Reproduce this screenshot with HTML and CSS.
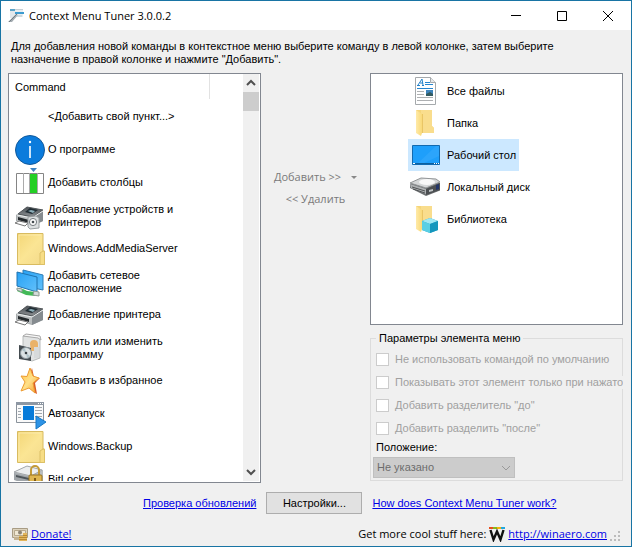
FILE: index.html
```html
<!DOCTYPE html>
<html lang="ru">
<head>
<meta charset="utf-8">
<title>Context Menu Tuner 3.0.0.2</title>
<link rel="stylesheet" href="styles.css">
</head>
<body>
<svg class="defs" aria-hidden="true">
  <defs>
    <linearGradient id="gFolder" x1="0" y1="0" x2="1" y2="1"><stop offset="0" stop-color="#f3d677"/><stop offset=".5" stop-color="#fbe594"/><stop offset="1" stop-color="#f2d98a"/></linearGradient>
    <linearGradient id="gFront" x1="0" y1="0" x2="1" y2="0"><stop offset="0" stop-color="#ffeaa8"/><stop offset="1" stop-color="#f9d978"/></linearGradient>
    <linearGradient id="gBlue" x1="0" y1="0" x2="1" y2="1"><stop offset="0" stop-color="#27a2f5"/><stop offset="1" stop-color="#62c0fb"/></linearGradient>
    <linearGradient id="gStar" x1="0" y1="0" x2="1" y2="1"><stop offset="0" stop-color="#ffc340"/><stop offset=".5" stop-color="#ffe08a"/><stop offset="1" stop-color="#f59a1e"/></linearGradient>
    <linearGradient id="gDark" x1="0" y1="0" x2="0" y2="1"><stop offset="0" stop-color="#4c5156"/><stop offset="1" stop-color="#8d9194"/></linearGradient>
  </defs>
  <symbol id="folder" viewBox="0 0 32 32">
    <path d="M3.500.500h25.500v17.500h1.500v13.500h-27z" fill="url(#gFolder)" stroke="#d8bb60"/>
    <path d="M29 18l-3 2v11.500h4.500v-13z" fill="#f7dd85" stroke="#dcc067"/>
    <path d="M5 30V2h22" fill="none" stroke="#fdf0b8" opacity=".7"/>
  </symbol>
  <symbol id="printer" viewBox="0 0 32 32">
    <path d="M2 15L13 7l16 3v11l-11 5L2 21z" fill="#a6abad"/>
    <path d="M4 14L13 7l16 3-10 7z" fill="url(#gDark)" stroke="#54595c"/>
    <path d="M11 12l5-4 8 2-6 4z" fill="#202c33"/><path d="M14 11l3-1 4 1-2 2z" fill="#8dafba"/>
    <path d="M3 15l15 3v7L3 21z" fill="#b9bdbe"/><path d="M18 18l11-7v10l-11 5z" fill="#858b8f"/>
    <path d="M4 17l11 3v3L4 20z" fill="#24292c"/><path d="M1 23l4-2 9 2-3 3z" fill="#fff" stroke="#777"/>
    <path d="M3 15l15 3 11-7" fill="none" stroke="#ecefef"/>
  </symbol>
  <symbol id="openfolder" viewBox="0 0 32 32">
    <path d="M8 3h16v16l2 2v5H10z" fill="#f5d57b"/><path d="M24 3v16l2 2v5H13V3z" fill="#f9dd8d"/>
    <path d="M8 3l6 4v19l-1 3-5-3z" fill="url(#gFront)"/><path d="M14.500 7v19" stroke="#e9c566"/>
  </symbol>
</svg>

<div class="window">
  <header class="titlebar">
    <svg class="app-icon" viewBox="0 0 16 16" aria-hidden="true"><path d="M2 1h6v9H2z" fill="#e2e8ec"/><path d="M2 1h6v2H2z" fill="#5ba4c9"/><path d="M7 1h8v8H7z" fill="#e9eef1"/><path d="M7 1h8v1H7z" fill="#c7d0d6"/><path d="M7 4h9v2H7z" fill="#3c9bd0"/><path d="M0 14L8 6l2 1-6 7z" fill="#a4acb1"/><path d="M1 14L9 6" stroke="#727d84"/><path d="M8 8h6" stroke="#b9c6cd"/></svg>
    <h1>Context Menu Tuner 3.0.0.2</h1>
    <div class="caption-buttons">
      <button type="button" aria-label="Minimize"><svg viewBox="0 0 10 10"><path d="M0 4.500h10"/></svg></button>
      <button type="button" aria-label="Maximize"><svg viewBox="0 0 10 10"><path d="M.500.500h9v9h-9z"/></svg></button>
      <button type="button" aria-label="Close"><svg viewBox="0 0 10 10"><path d="M0 0l10 10M10 0L0 10"/></svg></button>
    </div>
  </header>

  <p class="intro">Для добавления новой команды в контекстное меню выберите команду в левой колонке, затем выберите назначение в правой колонке и нажмите "Добавить".</p>

  <main class="columns">
    <section class="panel commands">
      <div class="command-view">
        <div class="list-head"><span>Command</span></div>
        <ul class="command-list">
          <li><span class="icon"></span><span>&lt;Добавить свой пункт...&gt;</span></li>
          <li><svg class="icon" viewBox="0 0 32 32"><circle cx="16" cy="16" r="14.500" fill="#0b7bdc" stroke="#12599b"/><path d="M16 12v12" stroke="#fff" stroke-width="1.600"/><circle cx="16" cy="8" r="1.200" fill="#fff"/></svg><span>О программе</span></li>
          <li><svg class="icon" viewBox="0 0 32 32"><path d="M16 1h7l-3.500 4z" fill="#3f83c1"/><path d="M2.500 6.500h27v20h-27z" fill="#fff" stroke="#858585"/><path d="M9.500 6v20M15.500 6v20M23.500 6v20" stroke="#ababab"/><path d="M16 7h7v19h-7z" fill="#23cf24"/></svg><span>Добавить столбцы</span></li>
          <li><svg class="icon" viewBox="0 0 32 32"><use href="#printer"/><path d="M14 17l8-1 3 2v10l-9 1-2-2z" fill="#dcdfe0" stroke="#9a9fa1"/><circle cx="19" cy="22" r="3.600" fill="#fafafa" stroke="#767c80"/><circle cx="19" cy="22" r="1.300" fill="#444b50"/></svg><span>Добавление устройств и принтеров</span></li>
          <li><svg class="icon"><use href="#folder"/></svg><span>Windows.AddMediaServer</span></li>
          <li><svg class="icon" viewBox="0 0 32 32"><path d="M9 4l20 5v15L9 20z" fill="url(#gBlue)" stroke="#2d7db6"/><path d="M3 6l20 5v15L3 20z" fill="url(#gBlue)" stroke="#1e73b0"/><path d="M3 22l6 1 4 2 8 1v4l-9-1-9-4z" fill="#42b957"/><path d="M3 22l5 1v3l-5-2zM20 25l5 1v4l-6-1z" fill="#d5dcda" stroke="#8d9b94"/></svg><span>Добавить сетевое расположение</span></li>
          <li><svg class="icon"><use href="#printer"/></svg><span>Добавление принтера</span></li>
          <li><svg class="icon" viewBox="0 0 32 32"><path d="M9 4l15 1 2 3v18l-8 3-9-3z" fill="#e1e3e3" stroke="#b9bcbc"/><path d="M9 4l3-2 14 2 1 4-3-2z" fill="#f7f7f7" stroke="#aaa"/><path d="M16 12a4 4 0 0 1 8 0v7h-7z" fill="#e9b269"/><path d="M20 15h5v11h-5z" fill="#d7dadb"/><path d="M5 13l12 3v13L5 27z" fill="#444b50"/><circle cx="12" cy="21" r="5.500" fill="#dce2e4" stroke="#8e999e"/><path d="M12 21l-4-3 3-2zM12 21l4 3-3 2z" fill="#b1c4ca"/><circle cx="12" cy="21" r="1.300" fill="#3a4145"/></svg><span>Удалить или изменить программу</span></li>
          <li><svg class="icon" viewBox="0 0 32 32"><path d="M18 3l2 9 6 1-5 5 2 11-2-1-8-9-4-7 6-.500z" fill="#d95d28"/><path d="M16 3l3 8 6 2-6 5 2 10-6-5-8 3 4-9-4-6 6 .500z" fill="url(#gStar)" stroke="#ee9c32"/></svg><span>Добавить в избранное</span></li>
          <li><svg class="icon" viewBox="0 0 32 32"><path d="M2.500 4.500h27v20h-27z" fill="#fafafa" stroke="#8a929b"/><path d="M2 4h28v3H2z" fill="#8d97a3"/><path d="M24 5.500h1m1 0h1m1 0h1" stroke="#fff"/><path d="M4 10.500h3m-3 3h3m-3 3h3m-3 3h3M21 9.500h7m-7 3h7m-7 3h7m-7 3h7" stroke="#a1a8af"/><path d="M9 8h11v14H9z" fill="#087bd9"/><path d="M22 18l10 6-10 7z" fill="#2d93e6" stroke="#1878c4"/></svg><span>Автозапуск</span></li>
          <li><svg class="icon"><use href="#folder"/></svg><span>Windows.Backup</span></li>
          <li><svg class="icon" viewBox="0 0 32 32"><path d="M0 8l13-6 16 4v11l-11 5L0 15z" fill="#b9bec1"/><path d="M0 8l13-6 15 4-11 6z" fill="#eceeef" stroke="#a5a9ac"/><path d="M0 9l17 4v9L0 16z" fill="#a0a5a9"/><path d="M2 11l13 3v2L2 13z" fill="#4e555a"/><path d="M17 11V6a4 4 0 0 1 8 0v6" fill="none" stroke="#c49b38" stroke-width="2"/><rect x="15" y="11" width="13" height="13" rx="1" fill="#dfb650" stroke="#987321"/><path d="M21 14v6" stroke="#805a14" stroke-width="2"/></svg><span>BitLocker</span></li>
        </ul>
      </div>
      <div class="scrollbar">
        <button type="button" aria-label="Scroll up"><svg viewBox="0 0 10 8"><path d="M1 6l4-4 4 4"/></svg></button>
        <div class="thumb"></div>
        <button type="button" class="down" aria-label="Scroll down"><svg viewBox="0 0 10 8"><path d="M1 2l4 4 4-4"/></svg></button>
      </div>
    </section>

    <div class="actions">
      <button type="button" class="add" disabled>Добавить &gt;&gt;<span class="caret"></span></button>
      <button type="button" disabled>&lt;&lt; Удалить</button>
    </div>

    <div class="right">
      <ul class="panel targets">
        <li><svg class="icon" viewBox="0 0 32 32"><path d="M7.500 2.500h15l5 5v22h-20z" fill="#fff" stroke="#a5a9ac"/><path d="M22.500 2.500v5h5" fill="#e5e7e8" stroke="#a5a9ac"/><path d="M10 10l4-6 1 6M12 8h3M9 10.500h3m2 0h2" fill="none" stroke="#2482c9"/><path d="M17 7.500h5M17 9.500h8M9 13.500h16" stroke="#2585cf"/><path d="M9 16.500h7m-7 3h7m-7 3h16m-16 3h16" stroke="#aeb0b2"/><path d="M18 15h7v6h-7z" fill="#3e84bc"/><path d="M18 19l4-2 3 2v2h-7z" fill="#345b60"/></svg><span>Все файлы</span></li>
        <li><svg class="icon"><use href="#openfolder"/></svg><span>Папка</span></li>
        <li class="selected"><svg class="icon" viewBox="0 0 32 32"><path d="M4.500 6.500h27v19h-27z" fill="#1e9ffb" stroke="#126ab0"/><path d="M31 7v10L14 25h-5L28 7z" fill="#42b0ff" opacity=".4"/><path d="M5 24.500h26" stroke="#0c5f9e"/><path d="M5 24.500h2m19 0h1m1 0h1m1 0h1" stroke="#fff"/></svg><span>Рабочий стол</span></li>
        <li><svg class="icon" viewBox="0 0 32 32"><path d="M2 13l11-5 15 1 5 4v6l-15 6L2 17z" fill="#6d7072"/><path d="M2 12l11-5 15 1 4 3-14 6z" fill="#d5d7d8" stroke="#929597"/><ellipse cx="19" cy="11" rx="8" ry="3" fill="#f8f8f8"/><path d="M2 13l16 5v5L3 17z" fill="#aeb1b3"/><path d="M4 16l13 4m-12-2l12 4" stroke="#505355"/><path d="M18 18l14-6v7l-14 5z" fill="#4c4f52"/><path d="M21 19l4-1v2l-4 1z" fill="#bfc3c5"/><path d="M28 14l3-1v5l-3 1z" fill="#23366a"/></svg><span>Локальный диск</span></li>
        <li><svg class="icon" viewBox="0 0 32 32"><use href="#openfolder"/><path d="M14 18l8-3 8 3v9l-8 3-8-3z" fill="#29a9cc"/><path d="M14 18l8-3 8 3-8 3z" fill="#9fe7f3"/><path d="M14 18l8 3v9l-8-3z" fill="#59cfe4"/><path d="M22 21l8-3v9l-8 3z" fill="#1496bd"/></svg><span>Библиотека</span></li>
      </ul>

      <fieldset class="options">
        <legend>Параметры элемента меню</legend>
        <label class="check"><input type="checkbox" disabled><span>Не использовать командой по умолчанию</span></label>
        <label class="check"><input type="checkbox" disabled><span>Показывать этот элемент только при нажато</span></label>
        <label class="check"><input type="checkbox" disabled><span>Добавить разделитель "до"</span></label>
        <label class="check"><input type="checkbox" disabled><span>Добавить разделить "после"</span></label>
        <label class="position-label" for="position">Положение:</label>
        <div class="combo">
          <select id="position" disabled><option>Не указано</option></select>
          <svg viewBox="0 0 10 6" aria-hidden="true"><path d="M1 1l4 4 4-4"/></svg>
        </div>
      </fieldset>
    </div>
  </main>

  <div class="links">
    <a href="#updates">Проверка обновлений</a>
    <button type="button">Настройки...</button>
    <a href="#help">How does Context Menu Tuner work?</a>
  </div>

  <footer class="status">
    <svg class="small-icon" viewBox="0 0 16 16" aria-hidden="true"><path d="M.500 2.500h15v9H.500z" fill="#ddd3bd" stroke="#a89c84"/><path d="M2.500 4.500h11v5h-11z" fill="#f0e8d4" stroke="#b7a98d"/><circle cx="8" cy="6.500" r="2" fill="#8d8474"/><path d="M2 11h5v3H2z" fill="#c3b292"/><path d="M7 10h4v5H7zM11 7h4v8h-4z" fill="#e3b65c"/><path d="M7 11.500h4m-4 2h8m-4-2h4m-4-2h4" stroke="#b78935"/></svg>
    <a href="#donate">Donate!</a>
    <span class="more">Get more cool stuff here:</span>
    <svg class="small-icon" viewBox="0 0 16 16" aria-hidden="true"><path d="M0 1h4v2H0z" fill="#e84f1c"/><path d="M4 1h4v2H4z" fill="#86b91d"/><path d="M8 1h4v2H8z" fill="#f5b50b"/><path d="M12 1h4v2h-4z" fill="#21a7df"/><path d="M1.500 4l3 9.500L8 5.500l3.500 8L14.500 4" fill="none" stroke="#111" stroke-width="2.400"/></svg>
    <a href="#winaero">http://winaero.com</a>
    <svg class="grip" viewBox="0 0 12 12" aria-hidden="true"><path d="M8 0h2v2H8zM4 4h2v2H4zM8 4h2v2H8zM0 8h2v2H0zM4 8h2v2H4zM8 8h2v2H8z" fill="#bcbcbc"/></svg>
  </footer>
</div>
</body>
</html>
```
FILE: styles.css
```css
* { box-sizing: border-box; }
body {
  margin: 0;
  font: 11px/13px "Liberation Sans", Arial, sans-serif;
  color: #000;
}
button, select, input { font: inherit; margin: 0; }
ul { list-style: none; margin: 0; padding: 0; }
a { color: #0000e6; }
.defs { position: absolute; width: 0; height: 0; }

.window {
  display: flex;
  flex-direction: column;
  height: 100vh;
  border: 1px solid #1874a4;
  background: #f0f0f0;
}

.titlebar {
  display: flex;
  align-items: center;
  height: 29px;
  flex: none;
  padding-left: 7px;
  gap: 5px;
  background: #fff;
}
.app-icon { width: 16px; height: 16px; }
.titlebar h1 {
  margin: 0;
  flex: 1;
  font: 11px/16px "Open Sans", "Noto Sans", sans-serif;
}
.caption-buttons { display: flex; }
.caption-buttons button {
  width: 46px;
  height: 28px;
  padding: 0;
  border: 0;
  background: none;
}
.caption-buttons svg { width: 10px; height: 10px; display: block; margin: auto; }
.caption-buttons path { fill: none; stroke: #000; }

.intro { margin: 10px 60px 7px 10px; }

.columns {
  display: grid;
  grid-template-columns: 1fr 109px 1fr;
  flex: 1;
  min-height: 0;
  margin: 0 8px 0 7px;
}
.panel { border: 1px solid #828790; background: #fff; }

.commands { display: flex; min-height: 0; padding: 0 1px 1px 0; }
.command-view {
  flex: 1;
  display: flex;
  flex-direction: column;
  min-width: 0;
  overflow: hidden;
}
.list-head { flex: none; display: flex; height: 26px; padding-bottom: 1px; }
.list-head span {
  width: 201px;
  padding: 7px 6px 0;
  border-right: 1px solid #e2e2e2;
}
.command-list li {
  display: flex;
  align-items: center;
  gap: 2px;
  height: 33px;
  padding-left: 5px;
}
.command-list span:last-child { width: 150px; }
.icon { width: 32px; height: 32px; flex: none; }

.scrollbar { display: flex; flex-direction: column; width: 16px; background: #f0f0f0; }
.scrollbar button { height: 18px; padding: 0; border: 0; background: none; }
.scrollbar svg { display: block; width: 10px; height: 8px; margin: auto; }
.scrollbar path { fill: none; stroke: #505050; stroke-width: 2; }
.thumb { height: 19px; background: #cdcdcd; }
.scrollbar .down { margin-top: auto; }

.actions { display: flex; flex-direction: column; align-items: center; padding-top: 93px; }
.actions button {
  display: flex;
  align-items: center;
  gap: 10px;
  height: 22px;
  padding: 0;
  border: 0;
  background: none;
  color: #7a7a7a;
  font: 11px/16px "Open Sans", "Noto Sans", sans-serif;
}
.caret { border: 3px solid transparent; border-top-color: #888; border-bottom: 0; }

.right { display: flex; flex-direction: column; min-width: 0; }
.targets { flex: 1; padding: 1px 0 0 37px; }
.targets li {
  display: flex;
  align-items: center;
  gap: 7px;
  width: max-content;
  height: 32px;
  padding-right: 3px;
}
.selected { background: #cce8ff; }

.options {
  min-width: 0;
  margin: 7px 0 2px;
  padding: 7px 0 2px 2px;
  border: 1px solid #dcdcdc;
}
.options legend { padding: 0 3px; margin-left: 3px; }
.check {
  display: flex;
  align-items: center;
  gap: 6px;
  height: 15px;
  margin: 0 -1px 8px 3px;
  color: #a0a0a0;
  white-space: nowrap;
  overflow: hidden;
}
.check input {
  appearance: none;
  flex: none;
  width: 13px;
  height: 13px;
  border: 1px solid #ccc;
  background: #fff;
}
.check span { background: #f0f0f0; }
.position-label { display: block; margin: -3px 0 3px 3px; }
.combo { position: relative; width: 142px; }
.combo select {
  display: block;
  appearance: none;
  width: 100%;
  height: 21px;
  padding: 0 3px;
  border: 1px solid #bfbfbf;
  border-radius: 0;
  background: #ccc;
  color: #6d6d6d;
  opacity: 1;
}
.combo svg { position: absolute; right: 4px; top: 8px; width: 10px; height: 6px; }
.combo path { fill: none; stroke: #999; }

.links {
  display: flex;
  align-items: center;
  gap: 10px;
  margin: 9px 10px 0 142px;
}
.links button {
  width: 96px;
  height: 22px;
  padding: 0;
  border: 1px solid #adadad;
  background: #e1e1e1;
  color: #000;
}

.status {
  display: flex;
  align-items: center;
  gap: 3px;
  margin: 11px 9px 3px 11px;
  font: 11px/18px "Open Sans", "Noto Sans", sans-serif;
}
.small-icon { width: 16px; height: 16px; }
.more { margin-left: auto; }
.grip { width: 12px; height: 12px; margin-top: 6px; }
```
